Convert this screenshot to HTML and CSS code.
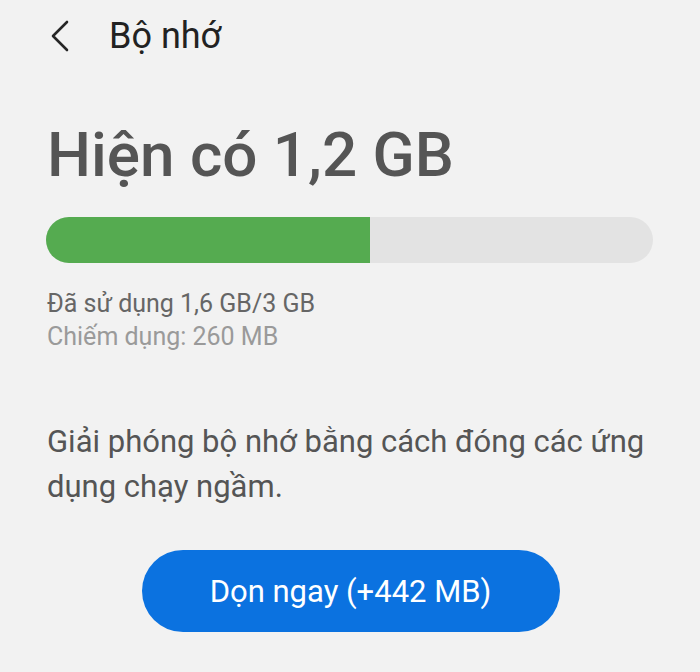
FILE: index.html
```html
<!DOCTYPE html>
<html lang="vi">
<head>
    <meta charset="UTF-8">
    <meta name="viewport" content="width=device-width, initial-scale=1.0">
    <title>Bộ nhớ</title>
    <link rel="stylesheet" href="styles.css">
</head>
<body>
    <header class="topbar">
        <button class="back" type="button" aria-label="Quay lại">
            <svg width="20" height="32" viewBox="0 0 20 32">
                <path d="M17 2 L3 16 L17 30" fill="none" stroke="#262626" stroke-width="2.6" stroke-linecap="round" stroke-linejoin="round"/>
            </svg>
        </button>
        <span class="topbar-title">Bộ nhớ</span>
    </header>

    <main class="content">
        <h1 class="available">Hiện có 1,2 GB</h1>

        <div class="bar">
            <div class="bar-fill" style="width: 53.3%"></div>
        </div>

        <div class="stats">
            <p class="used">Đã sử dụng 1,6 GB/3 GB</p>
            <p class="reserved">Chiếm dụng: 260 MB</p>
        </div>

        <p class="hint">Giải phóng bộ nhớ bằng cách đóng các ứng dụng chạy ngầm.</p>

        <div class="actions">
            <button class="clean" type="button">Dọn ngay (+442 MB)</button>
        </div>
    </main>
</body>
</html>
```

FILE: styles.css
```css
body {
    font-family: Roboto, "Noto Sans", sans-serif;
    background-color: #f2f2f2;
    margin: 0;
    padding: 0;
    color: #222;
}

.topbar {
    display: flex;
    align-items: center;
    height: 72px;
    padding-left: 50px;
}

.back {
    display: flex;
    align-items: center;
    padding: 0;
    margin-top: 0;
    background: none;
    border: none;
    cursor: pointer;
}

.topbar-title {
    margin-left: 39px;
    font-size: 36px;
    color: #222;
}

.content {
    padding: 0 47px 0 46px;
}

.available {
    margin: 43px 0 0 1px;
    font-size: 62px;
    font-weight: 500;
    line-height: 80px;
    color: #555;
}

.bar {
    margin-top: 22px;
    height: 46px;
    background-color: #e3e3e3;
    border-radius: 23px;
    overflow: hidden;
}

.bar-fill {
    height: 100%;
    background-color: #55ab50;
}

.stats {
    margin-top: 24px;
    margin-left: 1px;
}

.stats p {
    margin: 0;
    font-size: 25px;
    line-height: 33px;
}

.used {
    color: #666;
}

.reserved {
    color: #9a9a9a;
}

.hint {
    margin: 66px 0 0 1px;
    font-size: 31px;
    line-height: 45px;
    color: #555;
}

.actions {
    display: flex;
    justify-content: center;
    margin-top: 41px;
}

.clean {
    width: 418px;
    height: 82px;
    margin-left: 2px;
    font-family: Roboto, "Noto Sans", sans-serif;
    font-size: 31px;
    color: #fff;
    background-color: #0b72e0;
    border: none;
    border-radius: 41px;
    cursor: pointer;
}
```
